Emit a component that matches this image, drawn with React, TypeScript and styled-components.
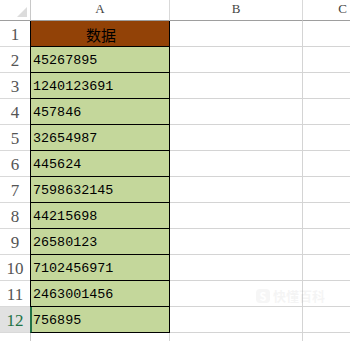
import React from "react";
import styled, { createGlobalStyle } from "styled-components";

const GlobalStyle = createGlobalStyle`
  html, body {
    margin: 0;
    padding: 0;
    background: #ffffff;
    overflow: hidden;
  }
`;

const values = [
  "45267895",
  "1240123691",
  "457846",
  "32654987",
  "445624",
  "7598632145",
  "44215698",
  "26580123",
  "7102456971",
  "2463001456",
  "756895",
];

const Sheet = styled.div`
  position: relative;
  width: 350px;
  height: 341px;
  overflow: hidden;
  display: grid;
  grid-template-columns: 31px 139px 133px 80px;
  grid-template-rows: 21px repeat(13, 26px);
  background: #fff;
`;

const Corner = styled.div`
  position: relative;
  border-right: 1px solid #c8c8c8;
  border-bottom: 1px solid #9e9e9e;
  box-sizing: border-box;
  &::after {
    content: "";
    position: absolute;
    right: 3px;
    bottom: 3px;
    width: 0;
    height: 0;
    border-left: 10px solid transparent;
    border-bottom: 10px solid #dcdcdc;
  }
`;

const ColHead = styled.div`
  box-sizing: border-box;
  border-right: 1px solid #d9d9d9;
  border-bottom: 1px solid #9e9e9e;
  display: flex;
  align-items: flex-end;
  justify-content: center;
  padding-bottom: 3px;
  font-family: "Liberation Serif", "DejaVu Serif", serif;
  font-size: 13px;
  color: #444;
`;

const RowHead = styled.div<{ $active?: boolean }>`
  box-sizing: border-box;
  border-right: 1px solid #c8c8c8;
  border-bottom: 1px solid #d9d9d9;
  background: ${(p) => (p.$active ? "#e1e1e1" : "#fff")};
  color: ${(p) => (p.$active ? "#217346" : "#555")};
  display: flex;
  align-items: flex-end;
  justify-content: center;
  padding-bottom: 1px;
  font-family: "Liberation Serif", "DejaVu Serif", serif;
  font-size: 17px;
`;

const DataCell = styled.div<{ $head?: boolean; $selected?: boolean }>`
  box-sizing: border-box;
  margin-left: -1px;
  border-left: ${(p) => (p.$selected ? "2px solid #217346" : "1px solid #000")};
  border-right: 1px solid #000;
  border-bottom: 1px solid #000;
  background: ${(p) => (p.$head ? "#924207" : "#c4d79b")};
  display: flex;
  align-items: center;
  justify-content: ${(p) => (p.$head ? "center" : "flex-start")};
  padding-left: ${(p) => (p.$selected ? "1px" : "2px")};
  padding-top: 2px;
  font-family: ${(p) =>
    p.$head
      ? `"Noto Sans CJK SC", sans-serif`
      : `"Liberation Mono", "DejaVu Sans Mono", monospace`};
  font-size: ${(p) => (p.$head ? "15px" : "13.4px")};
  color: #000;
`;

const Empty = styled.div`
  box-sizing: border-box;
  border-right: 1px solid #d4d4d4;
  border-bottom: 1px solid #d4d4d4;
`;

const Watermark = styled.div`
  position: absolute;
  left: 256px;
  top: 286px;
  display: flex;
  align-items: center;
  gap: 3px;
  opacity: 0.07;
  color: #777;
  font-family: "Noto Sans CJK SC", sans-serif;
  font-size: 13px;
  font-weight: 700;
`;

const WmBadge = styled.span`
  width: 14px;
  height: 14px;
  border-radius: 4px;
  background: #888;
  color: #fff;
  display: inline-flex;
  align-items: center;
  justify-content: center;
  font-size: 11px;
`;

export default function App() {
  const rows = [
    { label: "1", text: "数据", head: true },
    ...values.map((v, i) => ({ label: String(i + 2), text: v, head: false })),
  ];

  return (
    <>
      <GlobalStyle />
      <Sheet>
        <Corner />
        <ColHead>A</ColHead>
        <ColHead>B</ColHead>
        <ColHead>C</ColHead>
        {rows.map((r) => {
          const active = r.label === "12";
          return (
            <React.Fragment key={r.label}>
              <RowHead $active={active}>{r.label}</RowHead>
              <DataCell $head={r.head} $selected={active}>
                {r.text}
              </DataCell>
              <Empty />
              <Empty />
            </React.Fragment>
          );
        })}
        <RowHead />
        <Empty />
        <Empty />
        <Empty />
        <Watermark>
          <WmBadge>S</WmBadge>
          快懂百科
        </Watermark>
      </Sheet>
    </>
  );
}
